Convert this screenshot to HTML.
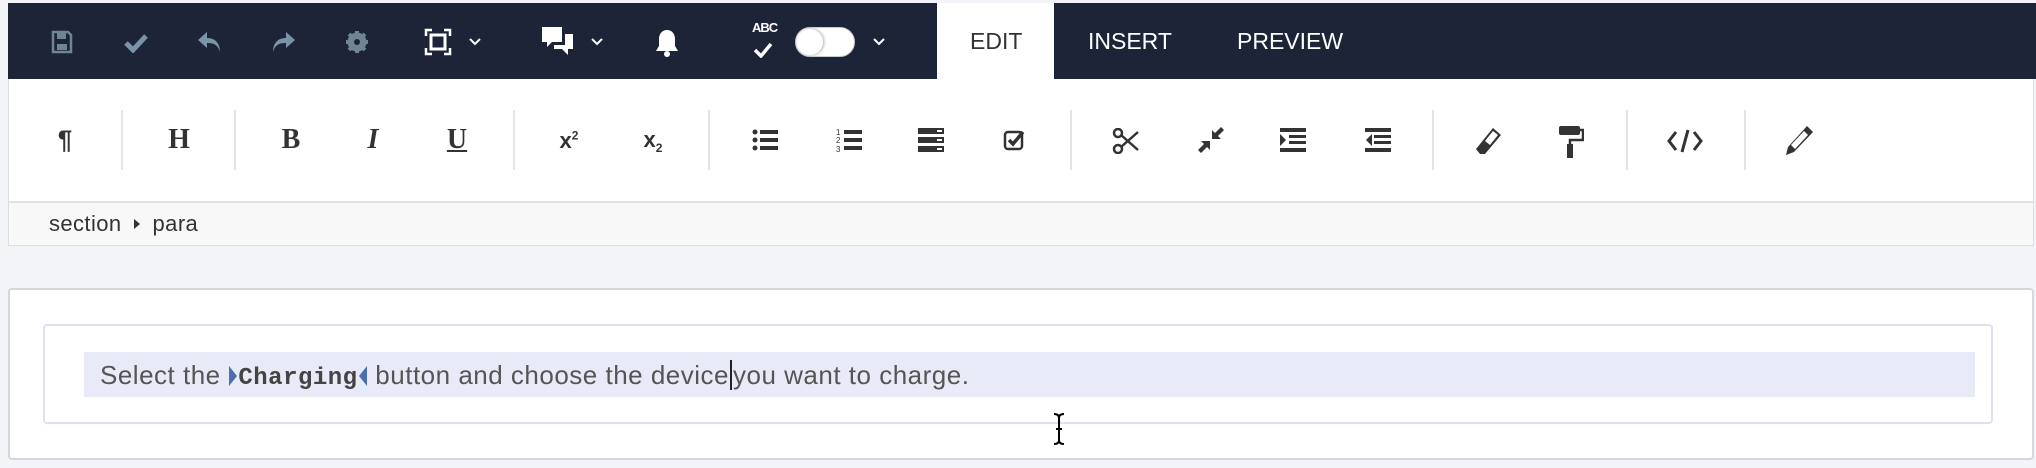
<!DOCTYPE html>
<html><head><meta charset="utf-8"><style>
*{margin:0;padding:0;box-sizing:border-box}
body{width:2036px;height:468px;background:#f3f4f8;font-family:"Liberation Sans",sans-serif;position:relative;overflow:hidden}
.abs{position:absolute}
.top{left:8px;top:3px;width:2028px;height:76px;background:#1e2437}
.ic{position:absolute;transform:translate(-50%,-50%)}
.tab{position:absolute;top:3px;height:76px;font-size:23px;color:#fff;line-height:76px}
.tb{left:8px;top:79px;width:2026px;height:122px;background:#fff;border-left:1px solid #dcdde3;border-right:1px solid #dcdde3}
.sep{position:absolute;top:110px;width:2px;height:60px;background:#e3e4e8}
.bc{left:8px;top:201px;width:2026px;height:45px;background:#f8f8f9;border:1px solid #dcdde3;border-top:2px solid #e0e1e5;font-size:22px;letter-spacing:.4px;color:#333;line-height:42px;padding-left:40px}
.t{position:absolute;transform:translate(-50%,-50%);color:#333;font-family:"Liberation Serif",serif;font-weight:bold;font-size:28px}
</style></head><body>
<div class="abs top"></div>
<div class="abs" style="left:937px;top:3px;width:117px;height:77px;background:#fff"></div>
<div class="tab" style="left:970px;color:#333">EDIT</div>
<div class="tab" style="left:1088px">INSERT</div>
<div class="tab" style="left:1237px">PREVIEW</div>
<svg class="ic" style="left:62px;top:42px" width="22" height="24" viewBox="0 0 22 24"><path d="M2 2h15l3 3v17H2z" fill="none" stroke="#6f8596" stroke-width="2.5"/><rect x="6" y="3" width="9" height="6" fill="#6f8596"/><rect x="6" y="14" width="10" height="6" fill="#6f8596"/></svg>
<svg class="ic" style="left:136px;top:43px" width="24" height="20" viewBox="0 0 24 20"><path d="M2 10l7 7L22 3" fill="none" stroke="#7a93a8" stroke-width="5"/></svg>
<svg class="ic" style="left:210px;top:42px" width="26" height="24" viewBox="0 0 26 24"><path d="M10 2L1 10l9 8v-5c7 0 11 2 13 9 0-9-5-14-13-14z" fill="#7a93a8"/></svg>
<svg class="ic" style="left:283px;top:42px" width="26" height="24" viewBox="0 0 26 24"><path d="M16 2l9 8-9 8v-5c-7 0-11 2-13 9 0-9 5-14 13-14z" fill="#7a93a8"/></svg>
<svg class="ic" style="left:357px;top:42px" width="24" height="24" viewBox="0 0 24 24"><circle cx="12" cy="12" r="7" fill="none" stroke="#6f8596" stroke-width="5"/><path d="M12 1v22M1 12h22M4 4l16 16M20 4L4 20" stroke="#6f8596" stroke-width="4"/><circle cx="12" cy="12" r="3" fill="#1e2437"/></svg>
<svg class="ic" style="left:438px;top:42px" width="28" height="28" viewBox="0 0 28 28"><path d="M2 8V2h6M20 2h6v6M26 20v6h-6M8 26H2v-6" fill="none" stroke="#fff" stroke-width="2.5"/><rect x="7" y="7" width="14" height="14" fill="none" stroke="#fff" stroke-width="3"/></svg>
<svg class="ic" style="left:475px;top:42px" width="14" height="10" viewBox="0 0 14 10"><path d="M2 2l5 5 5-5" fill="none" stroke="#fff" stroke-width="2"/></svg>
<svg class="ic" style="left:558px;top:42px" width="36" height="34" viewBox="0 0 36 34"><path d="M2 2h20v15H12l-5 5v-5H2z" fill="#fff"/><path d="M25 9h8v15h-5v6l-6-6H14v-4h11z" fill="#fff"/></svg>
<svg class="ic" style="left:597px;top:42px" width="14" height="10" viewBox="0 0 14 10"><path d="M2 2l5 5 5-5" fill="none" stroke="#fff" stroke-width="2"/></svg>
<svg class="ic" style="left:667px;top:43px" width="24" height="30" viewBox="0 0 24 30"><path d="M12 2c-5 0-8 4-8 9v7l-3 5h22l-3-5v-7c0-5-3-9-8-9z" fill="#fff"/><circle cx="12" cy="26" r="3" fill="#fff"/></svg>
<div class="abs" style="left:752px;top:20px;color:#fff;font-size:13px;font-weight:bold;letter-spacing:-1px">ABC</div>
<svg class="ic" style="left:763px;top:50px" width="20" height="16" viewBox="0 0 20 16"><path d="M2 8l6 6L18 2" fill="none" stroke="#fff" stroke-width="3.5"/></svg>
<div class="abs" style="left:795px;top:27px;width:60px;height:30px;border-radius:15px;background:#fff;border:1px solid #ccc"><div style="position:absolute;left:1px;top:1px;width:26px;height:26px;border-radius:13px;box-shadow:1px 0 3px #aaa;background:#fff"></div></div>
<svg class="ic" style="left:879px;top:42px" width="14" height="10" viewBox="0 0 14 10"><path d="M2 2l5 5 5-5" fill="none" stroke="#fff" stroke-width="2"/></svg>
<div class="abs tb"></div>
<div class="sep" style="left:121px"></div><div class="sep" style="left:234px"></div><div class="sep" style="left:513px"></div><div class="sep" style="left:708px"></div><div class="sep" style="left:1070px"></div><div class="sep" style="left:1432px"></div><div class="sep" style="left:1626px"></div><div class="sep" style="left:1744px"></div>
<div class="t" style="left:65px;top:140px;font-family:'Liberation Sans';font-size:26px">¶</div>
<div class="t" style="left:179px;top:140px">H</div>
<div class="t" style="left:291px;top:140px">B</div>
<div class="t" style="left:373px;top:140px;font-style:italic">I</div>
<div class="t" style="left:457px;top:140px;text-decoration:underline">U</div>
<div class="t" style="left:569px;top:141px;font-family:'Liberation Sans';font-size:22px">x<sup style="font-size:12px">2</sup></div>
<div class="t" style="left:653px;top:141px;font-family:'Liberation Sans';font-size:22px">x<sub style="font-size:12px">2</sub></div>
<svg class="ic" style="left:765px;top:140px" width="26" height="22" viewBox="0 0 26 22"><g fill="#333"><circle cx="3" cy="3" r="2.5"/><circle cx="3" cy="11" r="2.5"/><circle cx="3" cy="19" r="2.5"/><rect x="8" y="1" width="18" height="4"/><rect x="8" y="9" width="18" height="4"/><rect x="8" y="17" width="18" height="4"/></g></svg>
<svg class="ic" style="left:849px;top:140px" width="26" height="26" viewBox="0 0 26 26"><g fill="#333"><rect x="8" y="3" width="18" height="4"/><rect x="8" y="11" width="18" height="4"/><rect x="8" y="19" width="18" height="4"/></g><text x="0" y="8" font-size="8" fill="#333">1</text><text x="0" y="16" font-size="8" fill="#333">2</text><text x="0" y="25" font-size="8" fill="#333">3</text></svg>
<svg class="ic" style="left:931px;top:140px" width="26" height="24" viewBox="0 0 26 24"><g fill="#333"><rect x="0" y="0" width="26" height="6"/><rect x="0" y="9" width="26" height="6"/><rect x="0" y="18" width="26" height="6"/></g><rect x="19" y="2" width="5" height="2" fill="#fff"/><rect x="19" y="11" width="5" height="2" fill="#fff"/><rect x="19" y="20" width="5" height="2" fill="#fff"/></svg>
<svg class="ic" style="left:1015px;top:140px" width="24" height="24" viewBox="0 0 24 24"><rect x="2" y="4" width="17" height="17" rx="3" fill="none" stroke="#333" stroke-width="2.5"/><path d="M6 12l4 4 10-12" fill="none" stroke="#333" stroke-width="3.5"/></svg>
<svg class="ic" style="left:1126px;top:141px" width="28" height="26" viewBox="0 0 28 26"><circle cx="6" cy="5" r="4" fill="none" stroke="#333" stroke-width="2.5"/><circle cx="6" cy="21" r="4" fill="none" stroke="#333" stroke-width="2.5"/><path d="M9 7l17 15M9 19L26 4" stroke="#333" stroke-width="2.5"/></svg>
<svg class="ic" style="left:1211px;top:140px" width="26" height="26" viewBox="0 0 26 26"><g fill="#333"><path d="M14 12V3l3 3 6-6 3 3-6 6 3 3z"/><path d="M12 14v9l-3-3-6 6-3-3 6-6-3-3z"/></g></svg>
<svg class="ic" style="left:1293px;top:140px" width="26" height="24" viewBox="0 0 26 24"><g fill="#333"><rect x="0" y="0" width="26" height="4"/><rect x="9" y="7" width="17" height="3"/><rect x="9" y="13" width="17" height="3"/><rect x="0" y="20" width="26" height="4"/><path d="M0 6l6 6-6 6z"/></g></svg>
<svg class="ic" style="left:1378px;top:140px" width="26" height="24" viewBox="0 0 26 24"><g fill="#333"><rect x="0" y="0" width="26" height="4"/><rect x="9" y="7" width="17" height="3"/><rect x="9" y="13" width="17" height="3"/><rect x="0" y="20" width="26" height="4"/><path d="M7 6l-6 6 6 6z"/></g></svg>
<svg class="ic" style="left:1489px;top:141px" width="28" height="30" viewBox="0 0 28 30"><path d="M18 2l8 7L10 28H5l-4-5z" fill="#333"/><path d="M18 5l5 4-8 10-5-4z" fill="#fff"/></svg>
<svg class="ic" style="left:1571px;top:142px" width="26" height="34" viewBox="0 0 26 34"><rect x="1" y="1" width="21" height="9" rx="2" fill="#333"/><path d="M22 5h3v10H12v5" fill="none" stroke="#333" stroke-width="2.5"/><rect x="9" y="19" width="6" height="14" fill="#333"/></svg>
<svg class="ic" style="left:1685px;top:141px" width="36" height="26" viewBox="0 0 36 26"><path d="M9 4L2 13l7 9M27 4l7 9-7 9M21 2l-6 22" fill="none" stroke="#333" stroke-width="3"/></svg>
<svg class="ic" style="left:1800px;top:140px" width="30" height="32" viewBox="0 0 30 32"><path d="M22 2l6 6L9 28l-8 3 2-8z" fill="#333"/><path d="M19 7l4 4-13 14-4-4z" fill="#fff"/></svg>
<div class="abs bc">section <svg width="10" height="14" viewBox="0 0 10 14" style="margin:0 4px"><path d="M2 2l6 5-6 5z" fill="#333"/></svg> para</div>
<div class="abs" style="left:8px;top:288px;width:2026px;height:172px;background:#fff;border:2px solid #d6d7dd;border-radius:4px"></div>
<div class="abs" style="left:43px;top:324px;width:1950px;height:100px;background:#fff;border:2px solid #dde1f2;border-radius:4px"></div>
<div class="abs" style="left:84px;top:352px;width:1891px;height:45px;background:#e8ebf7"></div>
<div class="abs" style="left:100px;top:359px;font-size:26px;letter-spacing:.5px;color:#555;white-space:nowrap;line-height:32px">Select the <svg width="10" height="24" viewBox="0 0 10 24" style="vertical-align:-4px"><path d="M1 2l8 10-8 10z" fill="#4a6fb0"/></svg><b style="font-family:'Liberation Mono',monospace;color:#444;font-size:24px;letter-spacing:.5px">Charging</b><svg width="10" height="24" viewBox="0 0 10 24" style="vertical-align:-4px"><path d="M9 2L1 12l8 10z" fill="#4a6fb0"/></svg> button and choose the device<span style="border-left:2px solid #222;margin:0 1px"></span>you want to charge.</div>
<svg class="ic" style="left:1059px;top:429px" width="14" height="34" viewBox="0 0 14 34"><path d="M2 2q5 0 5 4v22q0 4-5 4M12 2q-5 0-5 4v22q0 4 5 4M4 17h6" fill="none" stroke="#000" stroke-width="2"/></svg>
</body></html>
